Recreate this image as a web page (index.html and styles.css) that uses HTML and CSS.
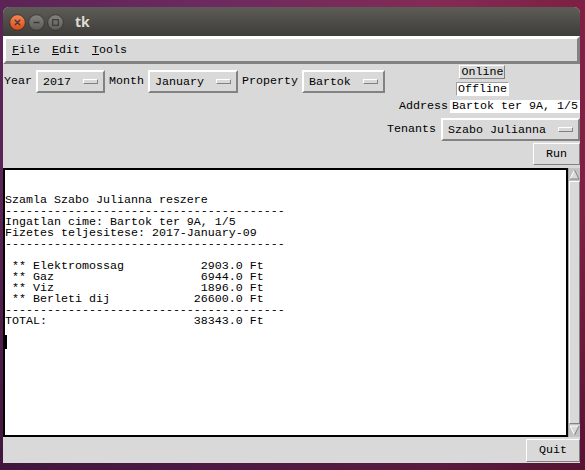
FILE: index.html
```html
<!DOCTYPE html>
<html>
<head>
<meta charset="utf-8">
<link rel="stylesheet" href="styles.css">
</head>
<body>
<div class="window">
  <div class="titlebar">
    <div class="wbtns">
      <svg class="wbtn" viewBox="0 0 17 17" width="17" height="17">
        <defs><linearGradient id="cg" x1="0" y1="0" x2="0" y2="1"><stop offset="0" stop-color="#f6875a"/><stop offset="1" stop-color="#dc4a18"/></linearGradient></defs>
        <circle cx="8.5" cy="8.5" r="7.8" fill="url(#cg)" stroke="#3a2c24" stroke-width="0.8"/>
        <path d="M6.2 6.2 L10.8 10.8 M10.8 6.2 L6.2 10.8" stroke="#3c3b37" stroke-width="1.3" stroke-linecap="round"/>
      </svg>
      <svg class="wbtn" viewBox="0 0 17 17" width="17" height="17">
        <defs><linearGradient id="gg" x1="0" y1="0" x2="0" y2="1"><stop offset="0" stop-color="#84837e"/><stop offset="1" stop-color="#5c5b57"/></linearGradient></defs>
        <circle cx="8.5" cy="8.5" r="7.8" fill="url(#gg)" stroke="#34332f" stroke-width="0.8"/>
        <path d="M5.5 8.5 L11.5 8.5" stroke="#3c3b37" stroke-width="1.4"/>
      </svg>
      <svg class="wbtn" viewBox="0 0 17 17" width="17" height="17">
        <circle cx="8.5" cy="8.5" r="7.8" fill="url(#gg)" stroke="#34332f" stroke-width="0.8"/>
        <rect x="5.7" y="5.7" width="5.6" height="5.6" fill="none" stroke="#3c3b37" stroke-width="1.2"/>
      </svg>
    </div>
    <span class="title">tk</span>
  </div>
  <div class="menubar">
    <span class="menu"><u>F</u>ile</span>
    <span class="menu"><u>E</u>dit</span>
    <span class="menu"><u>T</u>ools</span>
  </div>
  <div class="controls">
    <div class="row-a">
      <div class="selectors">
        <span class="lbl">Year</span>
        <span class="opt">2017<i class="ind"></i></span>
        <span class="lbl">Month</span>
        <span class="opt">January<i class="ind"></i></span>
        <span class="lbl">Property</span>
        <span class="opt">Bartok<i class="ind"></i></span>
      </div>
      <div class="status">
        <span class="toggle">Online</span>
        <span class="toggle on">Offline</span>
      </div>
    </div>
    <div class="addr"><span>Address</span><span class="entry">Bartok ter 9A, 1/5</span></div>
    <div class="tenants"><span class="lbl">Tenants</span><span class="opt">Szabo Julianna<i class="ind"></i></span></div>
    <div class="runrow"><span class="btn run">Run</span></div>
  </div>
  <div class="textrow">
<pre class="text">


Szamla Szabo Julianna reszere
----------------------------------------
Ingatlan cime: Bartok ter 9A, 1/5
Fizetes teljesitese: 2017-January-09
----------------------------------------

 ** Elektromossag           2903.0 Ft
 ** Gaz                     6944.0 Ft
 ** Viz                     1896.0 Ft
 ** Berleti dij            26600.0 Ft
----------------------------------------
TOTAL:                     38343.0 Ft

<span class="cursor"></span></pre>
    <div class="scrollbar">
      <svg class="arrow" viewBox="0 0 11 11" width="11" height="11">
        <polygon points="5.5,1 10,10 1,10" fill="#d9d9d9"/>
        <path d="M1 10 L5.5 1" stroke="#ffffff" stroke-width="1"/>
        <path d="M5.5 1 L10 10 L1 10" fill="none" stroke="#828282" stroke-width="1"/>
      </svg>
      <div class="slider"></div>
      <svg class="arrow" viewBox="0 0 11 11" width="11" height="11">
        <polygon points="1,1 10,1 5.5,10" fill="#d9d9d9"/>
        <path d="M1 1 L10 1 M1 1 L5.5 10" fill="none" stroke="#ffffff" stroke-width="1"/>
        <path d="M10 1 L5.5 10" stroke="#828282" stroke-width="1"/>
      </svg>
    </div>
  </div>
  <div class="footer"><span class="btn quit">Quit</span></div>
</div>
</body>
</html>
```

FILE: styles.css
```css
* { box-sizing: border-box; }
html, body { margin: 0; padding: 0; }
body {
  width: 585px;
  height: 470px;
  overflow: hidden;
  padding: 7px 5px 7px 3px;
  background:
    linear-gradient(to bottom, rgba(25, 0, 25, 0) 45%, rgba(25, 0, 25, 0.4) 100%),
    linear-gradient(to right, #5c2356 0%, #6c2a60 35%, #832b55 75%, #7e1f43 100%);
  font-family: "Liberation Mono", monospace;
  font-size: 11.67px;
  color: #000;
}
.window {
  width: 577px;
  height: 456px;
  display: flex;
  flex-direction: column;
  background: #d9d9d9;
  border-radius: 6px 6px 0 0;
  overflow: hidden;
}
.titlebar {
  height: 29px;
  flex: none;
  display: flex;
  align-items: flex-start;
  padding: 7px 0 0 6px;
  background: linear-gradient(#5d5c57, #3e3d39);
}
.wbtns { display: flex; gap: 2px; }
.wbtn { display: block; }
.title {
  margin: -1px 0 0 11px;
  font-family: "Noto Sans", "DejaVu Sans", sans-serif;
  font-weight: bold;
  font-size: 14px;
  line-height: 17px;
  color: #dfdbd2;
}
.menubar {
  height: 28px;
  flex: none;
  display: flex;
  border: 3px solid;
  border-color: #ffffff #828282 #828282 #ffffff;
  line-height: 22px;
}
.menu { padding: 0 6px; }
.menu u { text-decoration: underline; text-underline-offset: 1px; }
.controls {
  height: 104px;
  flex: none;
  display: flex;
  flex-direction: column;
  padding: 1px 0 0 1px;
}
.row-a { display: flex; height: 31px; flex: none; }
.selectors {
  display: flex;
  gap: 4px;
  align-items: center;
  height: 23px;
  margin-top: 5px;
}
.lbl { line-height: 23px; }
.opt {
  height: 23px;
  display: flex;
  align-items: center;
  padding: 0 5px;
  border: 2px solid;
  border-color: #ffffff #828282 #828282 #ffffff;
}
.ind {
  display: block;
  width: 15px;
  height: 5px;
  margin-left: 12px;
  border: 1px solid;
  border-color: #ffffff #828282 #828282 #ffffff;
  background: #d9d9d9;
}
.status {
  flex: 1;
  display: flex;
  flex-direction: column;
  align-items: center;
  gap: 3px;
}
.toggle {
  height: 14px;
  line-height: 12px;
  padding: 0 1px;
  border: 1px solid;
  border-color: #ffffff #828282 #828282 #ffffff;
}
.toggle.on {
  background: #ffffff;
  border-color: #a0a0a0 #ffffff #ffffff #a0a0a0;
}
.addr {
  align-self: flex-end;
  display: flex;
  height: 13px;
  line-height: 13px;
  margin-top: 4px;
}
.entry {
  width: 130px;
  margin-left: 2px;
  padding-left: 2px;
  background: #ffffff;
}
.tenants {
  align-self: flex-end;
  display: flex;
  align-items: center;
  gap: 5px;
  margin-top: 5px;
}
.runrow { align-self: flex-end; margin-top: 2px; }
.btn {
  display: block;
  padding: 0 12px;
  border: 1px solid;
  border-color: #ffffff #828282 #828282 #ffffff;
}
.run { height: 22px; line-height: 20px; }
.quit { height: 23px; line-height: 21px; }
.textrow {
  flex: 1;
  min-height: 0;
  display: flex;
}
.text {
  flex: 1;
  margin: 0;
  padding: 3px 0 0 0;
  border: 2px solid #000;
  background: #ffffff;
  font: inherit;
  line-height: 11px;
  white-space: pre;
  overflow: hidden;
}
.cursor {
  display: inline-block;
  width: 2px;
  height: 14px;
  background: #000;
  vertical-align: top;
  margin-top: -3px;
}
.scrollbar {
  width: 12px;
  flex: none;
  display: flex;
  flex-direction: column;
  align-items: center;
  padding: 1px 0;
  background: #c3c3c3;
  border-left: 1px solid #a8a8a8;
}
.arrow { display: block; flex: none; }
.slider {
  flex: 1;
  width: 11px;
  margin: 1px 0;
  background: #d9d9d9;
  border: 1px solid;
  border-color: #ffffff #828282 #828282 #ffffff;
}
.footer {
  height: 26px;
  flex: none;
  display: flex;
  justify-content: flex-end;
  padding-top: 2px;
}
```
